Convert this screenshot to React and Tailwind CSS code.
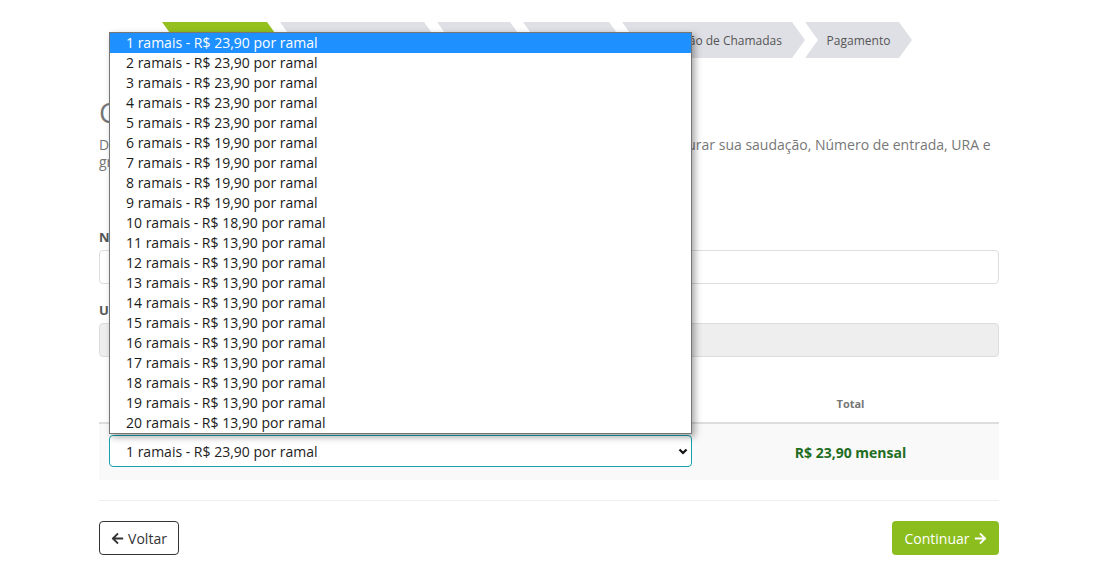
import { FaArrowLeft, FaArrowRight } from "react-icons/fa";

const steps = [
  { label: "Ramais", w: "w-[118px] justify-center", active: true },
  { label: "Número de Entrada", w: "w-[157px] justify-center" },
  { label: "Saudação", w: "w-[86px] justify-center" },
  { label: "Horários", w: "w-[99px] justify-center" },
  { label: "Distribuição de Chamadas", w: "w-[183px] justify-end pr-[23px]" },
  { label: "Pagamento", w: "w-[107px] justify-center" },
];

const options = Array.from({ length: 20 }, (_, i) => {
  const n = i + 1;
  let price = "13,90";
  if (n <= 5) price = "23,90";
  else if (n <= 9) price = "19,90";
  else if (n === 10) price = "18,90";
  return `${n} ramais - R$ ${price} por ramal`;
});

const App = () => {
  return (
    <div className="min-h-screen bg-white font-['Open_Sans',sans-serif] text-[#333]">
      <div className="w-[900px] mx-auto pt-[22px]">
        {/* Steps */}
        <div className="flex ml-[63px] h-9">
          {steps.map((s) => (
            <div
              key={s.label}
              className={`${s.w} h-9 flex items-center pl-[13px] pr-[13px] pt-px text-[12px] whitespace-nowrap overflow-hidden [clip-path:polygon(0_0,calc(100%_-_13px)_0,100%_50%,calc(100%_-_13px)_100%,0_100%,13px_50%)] ${
                s.active ? "bg-[#95c11f] text-white" : "bg-[#dfe0e5] text-[#555]"
              }`}
            >
              {s.label}
            </div>
          ))}
        </div>

        {/* Title */}
        <h1 className="mt-[39px] text-[28px] leading-[31px] text-[#777]">
          Configuração de Ramais
        </h1>
        <p className="mt-2 text-[14px] leading-[17px] text-[#777]">
          <span className="block whitespace-nowrap">
            Defina a quantidade de ramais que deseja contratar. Logo em seguida, você poderá configurar sua saudação, Número de entrada, URA e
          </span>
          <span className="block">grupos de atendimento.</span>
        </p>

        {/* Form */}
        <label className="block mt-[58px] text-[13px] leading-[18px] font-bold text-[#555]">
          Nome do plano
        </label>
        <input
          type="text"
          className="mt-1 block w-full h-[34px] border border-[#ddd] rounded-[4px] px-3 text-[14px] outline-none"
        />
        <label className="block mt-[17px] text-[13px] leading-[18px] font-bold text-[#555]">
          URL de acesso
        </label>
        <input
          type="text"
          disabled
          className="mt-1 block w-full h-[34px] border border-[#ddd] bg-[#eee] rounded-[4px] px-3 text-[14px] outline-none"
        />

        {/* Table */}
        <div className="mt-[29px]">
          <div className="grid grid-cols-[603px_297px] border-b-2 border-[#ddd]">
            <div className="py-[10px] px-[10px] text-[11px] leading-4 font-bold text-[#777]">
              Quantidade de ramais
            </div>
            <div className="py-[10px] text-center text-[11px] leading-4 font-bold text-[#777]">
              Total
            </div>
          </div>
          <div className="grid grid-cols-[603px_297px] bg-[#f9f9f9] h-14">
            <div className="px-[10px] pt-[11px]">
              <div className="relative w-[583px]">
                {/* open native list */}
                <div className="absolute left-0 bottom-full mb-px w-[583px] bg-white border border-[#767676] shadow-[3px_3px_7px_rgba(0,0,0,0.35)] z-10">
                  {options.map((o, i) => (
                    <div
                      key={o}
                      className={`h-5 leading-5 pl-4 text-[14px] ${
                        i === 0 ? "bg-[#1e90ff] text-white" : "text-[#1a1a1a]"
                      }`}
                    >
                      {o}
                    </div>
                  ))}
                </div>
                <select className="appearance-none block w-full h-8 border border-[#17a2ab] rounded-[4px] pl-4 pr-8 text-[14px] text-[#222] bg-white outline-none">
                  {options.map((o) => (
                    <option key={o}>{o}</option>
                  ))}
                </select>
                <svg
                  className="absolute right-[4px] top-[13px] pointer-events-none"
                  width="10"
                  height="7"
                  viewBox="0 0 10 7"
                >
                  <polyline
                    points="1.5,1.5 5,5 8.5,1.5"
                    fill="none"
                    stroke="#111"
                    strokeWidth="2.2"
                  />
                </svg>
              </div>
            </div>
            <div className="flex items-center justify-center text-[14px] font-bold text-[#1f6e1f]">
              R$ 23,90 mensal
            </div>
          </div>
        </div>

        <hr className="mt-5 border-0 border-t border-[#eee]" />

        <div className="mt-5 flex justify-between">
          <button className="h-[34px] w-20 flex items-center justify-center gap-1 border border-[#333] rounded-[4px] text-[14px] text-[#333] bg-white">
            <FaArrowLeft className="w-[13px] h-[13px]" />
            Voltar
          </button>
          <button className="h-[34px] w-[107px] flex items-center justify-center gap-1 rounded-[4px] text-[14px] text-white bg-[#8bbd1f]">
            Continuar
            <FaArrowRight className="w-[13px] h-[13px]" />
          </button>
        </div>
      </div>
    </div>
  );
};

export default App;
